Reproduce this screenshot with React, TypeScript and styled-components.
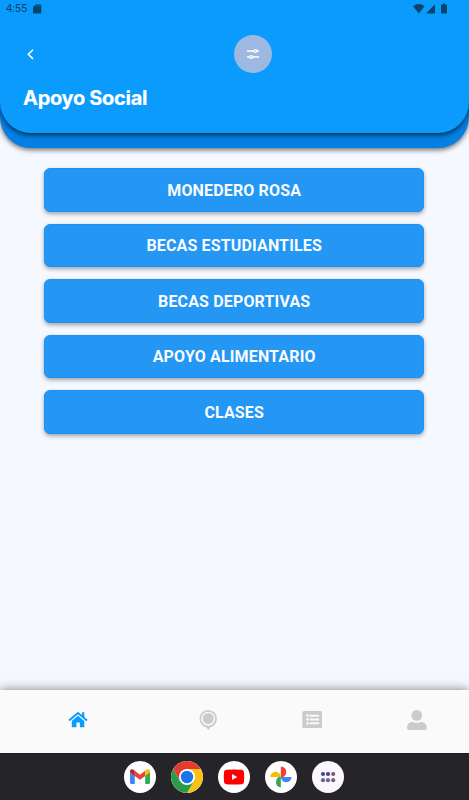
import React from 'react';
import styled, { createGlobalStyle } from 'styled-components';

const GlobalStyle = createGlobalStyle`
  * { box-sizing: border-box; }
  body { margin: 0; background: #f5f8ff; font-family: Roboto, sans-serif; }
`;

const Screen = styled.div`
  display: flex;
  flex-direction: column;
  height: 800px;
  overflow: hidden;
  background: #f5f8ff;
`;

const HeaderBack = styled.header`
  height: 148px;
  flex: none;
  background: #0480e5;
  border-radius: 0 0 31px 31px;
  box-shadow: 0 2px 5px rgba(0, 0, 0, 0.55);
`;

const HeaderFront = styled.div`
  display: flex;
  flex-direction: column;
  height: 133px;
  background: #0a9bfd;
  border-radius: 0 0 31px 31px;
  box-shadow: 0 2px 5px rgba(0, 0, 0, 0.65);
`;

const StatusBar = styled.div`
  display: flex;
  align-items: center;
  justify-content: space-between;
  height: 18px;
  padding: 0 20px 0 6px;
  color: #07456f;
`;

const StatusLeft = styled.div`
  display: flex;
  align-items: center;
  gap: 6px;
  font-size: 11px;
  line-height: 18px;
`;

const Toolbar = styled.div`
  display: flex;
  gap: 192px;
  align-items: center;
  height: 38px;
  margin-top: 17px;
`;

const IconButton = styled.button<{ $round?: boolean }>`
  display: grid;
  place-items: center;
  width: ${(p) => (p.$round ? '38px' : '24px')};
  height: ${(p) => (p.$round ? '38px' : '24px')};
  margin-left: ${(p) => (p.$round ? '0' : '18px')};
  padding: 0;
  border: 0;
  border-radius: 50%;
  background: ${(p) => (p.$round ? '#9db8e1' : 'transparent')};
`;

const Title = styled.h1`
  margin: 10px 0 0 23px;
  color: #fff;
  font: 700 20px/30px Inter, sans-serif;
  letter-spacing: -0.3px;
  -webkit-text-stroke: 0.2px #fff;
  white-space: nowrap;
`;

const Options = styled.main`
  flex: 1;
  display: flex;
  flex-direction: column;
  gap: 12px;
  padding: 20px 45px 0 44.4px;
`;

const Option = styled.button`
  height: 43.5px;
  padding: 2px 0 0;
  border: 1px solid #1b92f4;
  border-radius: 6px;
  background: #2496f3;
  color: #f8fbff;
  font: 700 16px/20px Roboto, sans-serif;
  letter-spacing: 0.15px;
  box-shadow: 0 2px 4px rgba(0, 0, 0, 0.35);
`;

const BottomNav = styled.nav`
  height: 63px;
  padding: 20px 42px 0 68px;
  background: #fafafa;
  box-shadow: 0 0 10px rgba(0, 0, 0, 0.5);
`;

const NavItems = styled.div`
  display: grid;
  grid-template-columns: 130px 104px 105px 20px;
`;

const NavItem = styled.div<{ $active?: boolean }>`
  display: flex;
  width: 20px;
  color: ${(p) => (p.$active ? '#0a9bfd' : '#cbcbcb')};
`;

const Dock = styled.footer`
  display: flex;
  align-items: center;
  justify-content: center;
  gap: 15px;
  height: 47px;
  padding: 0 1px 1px 0;
  z-index: 1;
  background: #252529;
  border-top: 1px solid #1d1d20;
`;

const AppIcon = styled.div<{ $tint?: string }>`
  display: grid;
  place-items: center;
  width: 32px;
  height: 32px;
  border-radius: 50%;
  background: ${(p) => p.$tint ?? '#fff'};
  overflow: hidden;
`;

const options = ['MONEDERO ROSA', 'BECAS ESTUDIANTILES', 'BECAS DEPORTIVAS', 'APOYO ALIMENTARIO', 'CLASES'];

const SdCard = () => (
  <svg width="9" height="10" viewBox="0 0 9 10" fill="currentColor">
    <path d="M3 .5h4.5q.8 0 .8.8v7.4q0 .8-.8.8h-7q-.5 0-.5-.8V3z" />
    <path d="M3.4 1.500v1.500M5.200 1.500v1.500M7 1.500v1.500" stroke="#0a78c0" strokeWidth=".7" />
  </svg>
);

const StatusIcons = () => (
  <svg width="36" height="12" viewBox="0 0 36 12" fill="currentColor">
    <path d="M0 3.200Q5.800-1.100 11.600 3.200L5.800 10.400z" />
    <path d="M13 10.400 22 1.200v9.200z" />
    <path d="M30 .4h2v1h1.200q.8 0 .8.8v7.600q0 .8-.8.8h-4.400q-.8 0-.8-.8V2.200q0-.8.8-.8H30z" />
  </svg>
);

const Back = () => (
  <svg width="24" height="24" viewBox="0 0 24 24" fill="none" stroke="#fff" strokeWidth="1.5">
    <path d="m15 7.700-4.700 4.600 4.700 4.600" />
  </svg>
);

const Sliders = () => (
  <svg width="14" height="12" viewBox="0 0 14 12" fill="none" stroke="#fff" strokeWidth="1.400">
    <path d="M1 3h6.700m3 0H13M1 9h2.600m3 0H13" />
    <circle cx="9.300" cy="3" r="1.400" />
    <circle cx="5.200" cy="9" r="1.400" />
  </svg>
);

const House = () => (
  <svg width="20" height="20" viewBox="0 0 20 20">
    <path d="M1 10.400 10 3l9 7.400" fill="none" stroke="currentColor" strokeWidth="1.900" />
    <path d="M14 2.200h2.300v5.700L14 6z" fill="currentColor" />
    <path d="m10 5.700 6.300 5.200v6.400h-4.400v-4.800H8.400v4.800H3.800v-6.400z" fill="currentColor" />
  </svg>
);

const Pin = () => (
  <svg width="20" height="20" viewBox="0 0 20 20">
    <circle cx="10.200" cy="8.800" r="7.900" fill="none" stroke="currentColor" strokeWidth="1.800" />
    <circle cx="10.200" cy="8.500" r="5.500" fill="currentColor" />
    <path d="m7.600 16.500 2.800 3.500 2.300-3.500z" fill="currentColor" />
  </svg>
);

const ListIcon = () => (
  <svg width="20" height="20" viewBox="0 0 20 20">
    <rect x="0.300" y="1" width="19.700" height="17" rx="1.500" fill="currentColor" />
    <g fill="#fafafa">
      <circle cx="5.600" cy="5.700" r="1.400" />
      <circle cx="5.600" cy="9.500" r="1.400" />
      <circle cx="5.600" cy="13.300" r="1.400" />
      <path d="M7.800 4.700h9.400v2H7.800zM7.800 8.500h9.400v2H7.800zM7.800 12.300h9.400v2H7.800z" />
    </g>
  </svg>
);

const Person = () => (
  <svg width="20" height="20" viewBox="0 0 20 20" fill="currentColor">
    <circle cx="9.800" cy="5.400" r="5.400" />
    <path d="M5.800 11.900q4 1.700 8 0c3.800 0 6 2.300 6 6q0 2.100-2 2.100H2q-2 0-2-2.100c0-3.700 2-6 5.800-6z" />
  </svg>
);

const Gmail = () => (
  <svg width="22" height="18" viewBox="0 0 22 18">
    <path d="M1 4v10.500q0 1.500 1.500 1.500h3.300V7.500z" fill="#4285f4" />
    <path d="M21 4v10.500q0 1.500-1.500 1.500h-3.300V7.500z" fill="#34a853" />
    <path d="M5.800 2.800 11 6.700l5.200-3.900v5.100L11 11.800 5.800 7.900z" fill="#ea4335" />
    <path d="M1 3.500C1 .6 3.300.8 4.600 1.800l1.200 1v5.100L1 4.300z" fill="#c5221f" />
    <path d="M21 3.500c0-2.900-2.300-2.700-3.600-1.700l-1.200 1v5.100L21 4.300z" fill="#fbbc04" />
  </svg>
);

const Chrome = () => (
  <svg width="32" height="32" viewBox="0 0 32 32">
    <path d="M2.100 8A16 16 0 0 1 29.900 8H16L9 20z" fill="#e33b2e" />
    <path d="M29.900 8A16 16 0 0 1 16 32l7-12L16 8z" fill="#fbc116" />
    <path d="M16 32A16 16 0 0 1 2.100 8L9 20h14z" fill="#2b9a49" />
    <circle cx="16" cy="16" r="8" fill="#fff" />
    <circle cx="16" cy="16" r="6.200" fill="#1a73e8" />
  </svg>
);

const YouTube = () => (
  <svg width="22" height="16" viewBox="0 0 22 16">
    <path d="M3.200.8Q11 0 18.800.8q2 .2 2.200 2.200.5 5 0 10-.2 2-2.200 2.200-7.800.8-15.600 0Q1.200 15 1 13 .5 8 1 3 1.200 1 3.200.8z" fill="#f00" />
    <path d="M9 5v6l5.300-3z" fill="#fff" />
  </svg>
);

const Photos = () => (
  <svg width="24" height="24" viewBox="0 0 24 24">
    <path d="M11.800 1.500a5.500 5.500 0 0 1 0 11z" fill="#ea4335" />
    <path d="M22.500 12a5.300 5.300 0 0 1-10.600 0z" fill="#4285f4" />
    <path d="M11.800 22.500a5.500 5.500 0 0 1 0-10.900z" fill="#34a853" />
    <path d="M1.200 12a5.300 5.300 0 0 1 10.600 0z" fill="#fbbc04" />
  </svg>
);

const AllApps = () => (
  <svg width="16" height="12" viewBox="0 0 16 12">
    <circle cx="3" cy="3" r="2.100" fill="#414989" />
    <circle cx="8" cy="3" r="2.100" fill="#414989" />
    <circle cx="13.200" cy="3" r="2.100" fill="#845777" />
    <g fill="#696b85">
      <circle cx="3" cy="9.200" r="2.100" />
      <circle cx="8" cy="9.200" r="2.100" />
      <circle cx="13.200" cy="9.200" r="2.100" />
    </g>
  </svg>
);

export default function App() {
  return (
    <Screen>
      <GlobalStyle />
      <HeaderBack>
        <HeaderFront>
          <StatusBar>
            <StatusLeft>4:55<SdCard /></StatusLeft>
            <StatusIcons />
          </StatusBar>
          <Toolbar>
            <IconButton aria-label="Volver"><Back /></IconButton>
            <IconButton $round aria-label="Filtros"><Sliders /></IconButton>
          </Toolbar>
          <Title>Apoyo Social</Title>
        </HeaderFront>
      </HeaderBack>
      <Options>
        {options.map((label) => <Option key={label}>{label}</Option>)}
      </Options>
      <BottomNav>
        <NavItems>
          <NavItem $active><House /></NavItem>
          <NavItem><Pin /></NavItem>
          <NavItem><ListIcon /></NavItem>
          <NavItem><Person /></NavItem>
        </NavItems>
      </BottomNav>
      <Dock>
        <AppIcon><Gmail /></AppIcon>
        <AppIcon><Chrome /></AppIcon>
        <AppIcon><YouTube /></AppIcon>
        <AppIcon><Photos /></AppIcon>
        <AppIcon $tint="#fcf7ff"><AllApps /></AppIcon>
      </Dock>
    </Screen>
  );
}
